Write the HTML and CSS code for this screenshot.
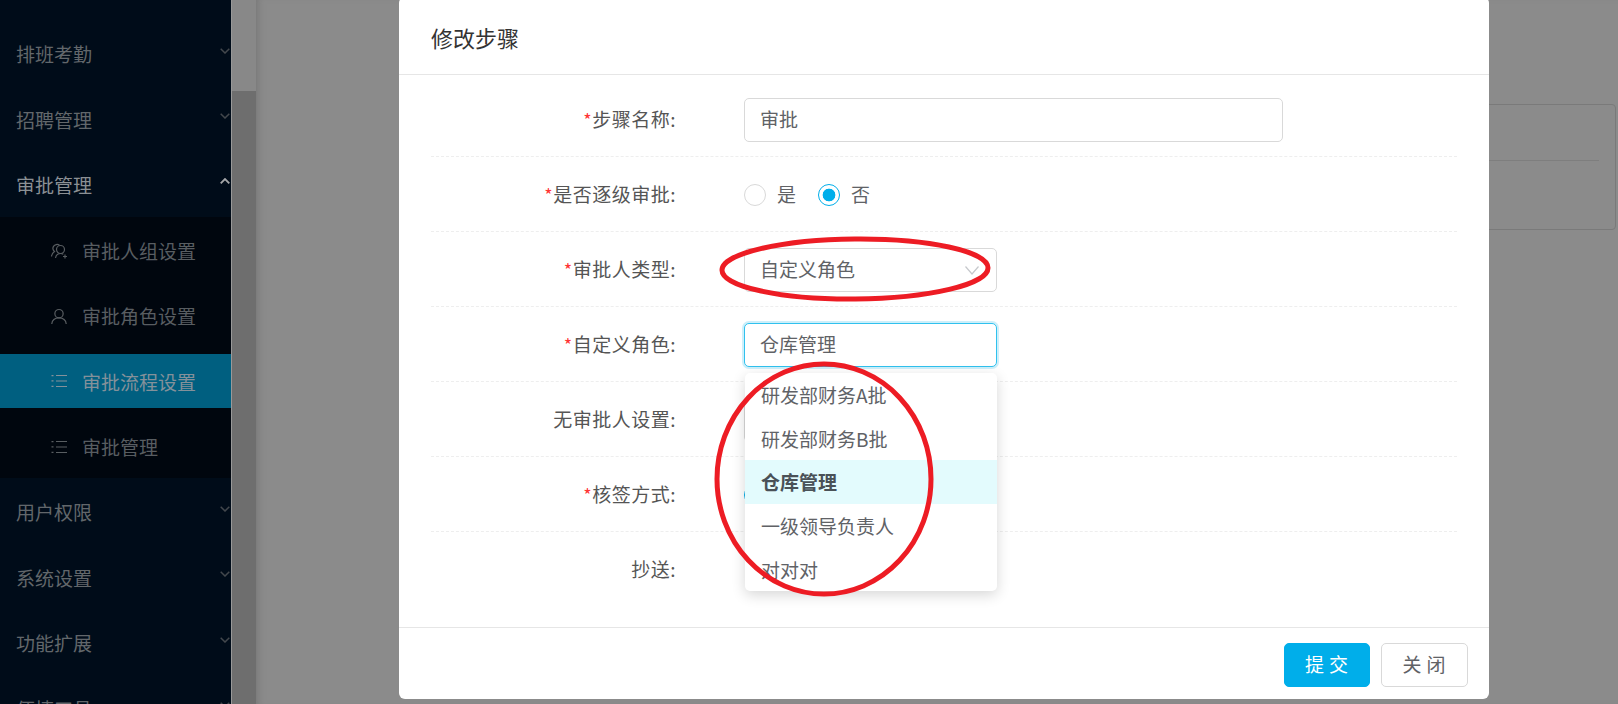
FILE: index.html
```html
<!DOCTYPE html>
<html lang="zh">
<head>
<meta charset="utf-8">
<title>修改步骤</title>
<link rel="stylesheet" href="styles.css">
</head>
<body>
<svg class="defs" width="0" height="0" aria-hidden="true">
  <symbol id="down" viewBox="0 0 10 6"><path d="M.7.7 5 5 9.3.7" fill="none" stroke="currentColor" stroke-width="1.5"/></symbol>
  <symbol id="up" viewBox="0 0 10 6"><path d="M.7 5.3 5 1l4.3 4.3" fill="none" stroke="currentColor" stroke-width="1.8"/></symbol>
  <symbol id="list" viewBox="0 0 16 16"><path d="M5 2.500h11M5 8h11M5 13.500h11" fill="none" stroke="currentColor" stroke-width="1.200"/><path d="M.5 2h2v1.300h-2zM.5 7.300h2v1.300h-2zM.5 12.800h2v1.300h-2z" fill="currentColor"/></symbol>
</svg>
<div class="app">
  <nav class="sidebar">
    <div class="menu-head"><span>排班考勤</span><svg class="chev"><use href="#down"/></svg></div>
    <div class="menu-head"><span>招聘管理</span><svg class="chev"><use href="#down"/></svg></div>
    <div class="menu-head open"><span>审批管理</span><svg class="chev"><use href="#up"/></svg></div>
    <div class="submenu">
      <div class="sub-item">
        <svg class="sub-icon group" viewBox="0 0 18 18"><path d="M1.500 15.500c.2-2.200 1.200-3.900 3-5-1.600-1.300-2-3.300-1-5.100C4.700 3.400 7.600 2.800 9.500 4.300" fill="none" stroke="currentColor" stroke-width="1.200"/><circle cx="10.500" cy="8.500" r="4" fill="none" stroke="currentColor" stroke-width="1.200"/><path d="M5.500 17c.5-2.700 2.400-4.500 5-4.500 1.100 0 2 .3 2.800.8M15 13.500v4M13 15.500h4" fill="none" stroke="currentColor" stroke-width="1.200"/></svg>
        <span>审批人组设置</span>
      </div>
      <div class="sub-item">
        <svg class="sub-icon" viewBox="0 0 17 17"><circle cx="8.500" cy="6" r="4.400" fill="none" stroke="currentColor" stroke-width="1.300"/><path d="M.8 17c.4-3.800 3.300-6.500 7.700-6.500s7.300 2.700 7.700 6.500" fill="none" stroke="currentColor" stroke-width="1.300"/></svg>
        <span>审批角色设置</span>
      </div>
      <div class="sub-item active"><svg class="sub-icon"><use href="#list"/></svg><span>审批流程设置</span></div>
      <div class="sub-item"><svg class="sub-icon"><use href="#list"/></svg><span>审批管理</span></div>
    </div>
    <div class="menu-head"><span>用户权限</span><svg class="chev"><use href="#down"/></svg></div>
    <div class="menu-head"><span>系统设置</span><svg class="chev"><use href="#down"/></svg></div>
    <div class="menu-head"><span>功能扩展</span><svg class="chev"><use href="#down"/></svg></div>
    <div class="menu-head"><span>便捷工具</span><svg class="chev"><use href="#down"/></svg></div>
  </nav>
  <div class="scrollbar"><div class="thumb"></div></div>
  <main class="content">
    <div class="card"><div class="card-line"></div></div>
  </main>
</div>

<section class="modal">
  <header class="modal-head">修改步骤</header>
  <div class="modal-body">
    <div class="row">
      <label class="label"><i>*</i>步骤名称:</label>
      <div class="control wide"><div class="input">审批</div></div>
    </div>
    <div class="row">
      <label class="label"><i>*</i>是否逐级审批:</label>
      <div class="control radios">
        <span class="radio"></span><span class="radio-text">是</span>
        <span class="radio on"></span><span class="radio-text">否</span>
      </div>
    </div>
    <div class="row">
      <label class="label"><i>*</i>审批人类型:</label>
      <div class="control"><div class="input">自定义角色
        <svg class="select-arrow" viewBox="0 0 14 9"><path d="M.5.500 7 8 13.500.500" fill="none" stroke="currentColor" stroke-width="1.200"/></svg></div></div>
    </div>
    <div class="row">
      <label class="label"><i>*</i>自定义角色:</label>
      <div class="control"><div class="input focus">仓库管理</div>
        <ul class="dropdown">
          <li>研发部财务A批</li>
          <li>研发部财务B批</li>
          <li class="picked">仓库管理</li>
          <li>一级领导负责人</li>
          <li>对对对</li>
        </ul>
      </div>
    </div>
    <div class="row">
      <label class="label">无审批人设置:</label>
      <div class="control"><div class="input"></div></div>
    </div>
    <div class="row">
      <label class="label"><i>*</i>核签方式:</label>
      <div class="control radios"><span class="radio on"></span></div>
    </div>
    <div class="row last">
      <label class="label">抄送:</label>
      <div class="control"></div>
    </div>
  </div>
  <footer class="modal-foot">
    <button class="btn primary">提交</button>
    <button class="btn">关闭</button>
  </footer>
</section>

<svg class="marks" width="1618" height="704" viewBox="0 0 1618 704" aria-hidden="true">
  <ellipse cx="855" cy="269" rx="133" ry="30" transform="rotate(-0.500 855 269)"/>
  <ellipse cx="824" cy="479" rx="107" ry="115"/>
</svg>
</body>
</html>
```
FILE: styles.css
```css
* { box-sizing: border-box; }
html, body { margin: 0; height: 704px; overflow: hidden; }
body {
  font-family: "Noto Sans CJK SC", "Noto Sans", sans-serif;
  font-size: 19px;
  background: #8b8b8b;
  color: #555;
}
.defs { position: absolute; }
.app { display: flex; height: 704px; overflow: hidden; }

.sidebar {
  width: 231px;
  flex: none;
  padding-top: 21px;
  background: #000c19;
  color: #62676b;
  overflow: hidden;
}
.menu-head {
  height: 65.4px;
  display: flex;
  align-items: center;
  justify-content: space-between;
  padding: 0 1px 0 16px;
  line-height: 1;
}
.submenu ~ .menu-head { padding-top: 2px; }
.menu-head.open { color: #8b9094; }
.chev { width: 10px; height: 6px; margin-top: -6px; color: #43484d; }
.open .chev { color: #a5a7a9; }
.submenu { background: #00060e; height: 261px; padding-top: 6px; color: #585d61; }
.sub-item {
  height: 54px;
  margin-bottom: 11.5px;
  display: flex;
  align-items: center;
  padding-left: 51px;
  line-height: 1;
}
.sub-item > span { position: relative; top: 0; }
.sub-icon { width: 16px; height: 16px; margin-right: 15px; flex: none; }
.sub-icon.group { width: 18px; height: 18px; margin: 0 14px 0 -1px; }
.sub-item.active { background: #005f80; color: #84919a; }

.scrollbar { width: 25px; flex: none; background: #888; border-left: 1px solid #999; }
.thumb { height: 613px; margin-top: 91px; background: #6e6e6e; }
.content {
  flex: 1;
  min-width: 0;
  padding: 104px 2px 0 200px;
  background: #8b8b8b;
  box-shadow: inset 7px 0 7px -5px #777;
}
.card {
  height: 126px;
  border: 1px solid #7a7a7a;
  border-radius: 4px;
  padding: 55px 16px 0 16px;
}
.card-line { height: 1px; background: #7e7e7e; }

.modal {
  position: absolute;
  left: 399px;
  top: -3px;
  width: 1090px;
  height: 702px;
  background: #fff;
  border-radius: 6px;
  display: flex;
  flex-direction: column;
}
.modal-head {
  height: 78px;
  flex: none;
  padding: 3px 32px 0;
  display: flex;
  align-items: center;
  font-size: 22px;
  color: #333;
  border-bottom: 1px solid #e6e6e6;
}
.modal-body { flex: 1; padding: 7px 32px 0; }
.row {
  height: 75px;
  display: flex;
  padding-top: 16px;
  border-bottom: 1px dashed #eee;
}
.row.last { border-bottom: 0; }
.label {
  width: 245px;
  height: 44px;
  margin-right: 68px;
  padding-bottom: 3px;
  flex: none;
  display: flex;
  align-items: center;
  justify-content: flex-end;
  color: #555;
  line-height: 1;
  letter-spacing: .5px;
}
.label i { color: #f33; font-style: normal; font-size: 18px; }
.control { position: relative; width: 253px; height: 44px; }
.control.wide { width: 539px; }
.input {
  position: relative;
  height: 44px;
  padding: 0 16px 3px 15px;
  display: flex;
  align-items: center;
  background: #fff;
  border: 1px solid #d9d9d9;
  border-radius: 5px;
  color: #606266;
}
.input.focus { border-color: #30c1ee; box-shadow: 0 0 0 2px #cdeffa; }
.select-arrow { position: absolute; right: 17px; top: 17px; width: 14px; height: 9px; color: #c6c8cc; }
.radios { display: flex; align-items: center; width: auto; padding-bottom: 1px; }
.radio {
  width: 22px;
  height: 22px;
  border: 1px solid #d9d9d9;
  border-radius: 50%;
  flex: none;
}
.radio.on {
  border-color: #00aeea;
  background: radial-gradient(circle, #00aeea 0 6px, #fff 6.7px);
}
.radio-text { margin: 0 22px 2px 11px; color: #606266; }
.dropdown {
  position: absolute;
  z-index: 2;
  left: 1px;
  top: 50px;
  width: 252px;
  height: 218px;
  margin: 0;
  padding: 0;
  list-style: none;
  background: #fff;
  border-radius: 5px;
  box-shadow: 0 4px 14px rgba(0, 0, 0, .16);
  overflow: hidden;
}
.dropdown li {
  height: 43.6px;
  padding-left: 16px;
  display: flex;
  align-items: center;
  color: #606266;
}
.dropdown li.picked { background: #e3fbfd; color: #4a5157; font-weight: 700; }

.modal-foot {
  height: 72px;
  flex: none;
  padding: 15px 21px 0 0;
  display: flex;
  justify-content: flex-end;
  gap: 11px;
  border-top: 1px solid #e6e6e6;
}
.btn {
  width: 87px;
  height: 44px;
  padding: 0 0 3px 4px;
  font: inherit;
  letter-spacing: 5px;
  color: #606266;
  background: #fff;
  border: 1px solid #d9d9d9;
  border-radius: 5px;
}
.btn.primary { width: 86px; background: #00aeea; border-color: #00aeea; color: #fff; }

.marks { position: absolute; left: 0; top: 0; pointer-events: none; z-index: 5; }
.marks ellipse { fill: none; stroke: #ed1c24; stroke-width: 5; }
```
